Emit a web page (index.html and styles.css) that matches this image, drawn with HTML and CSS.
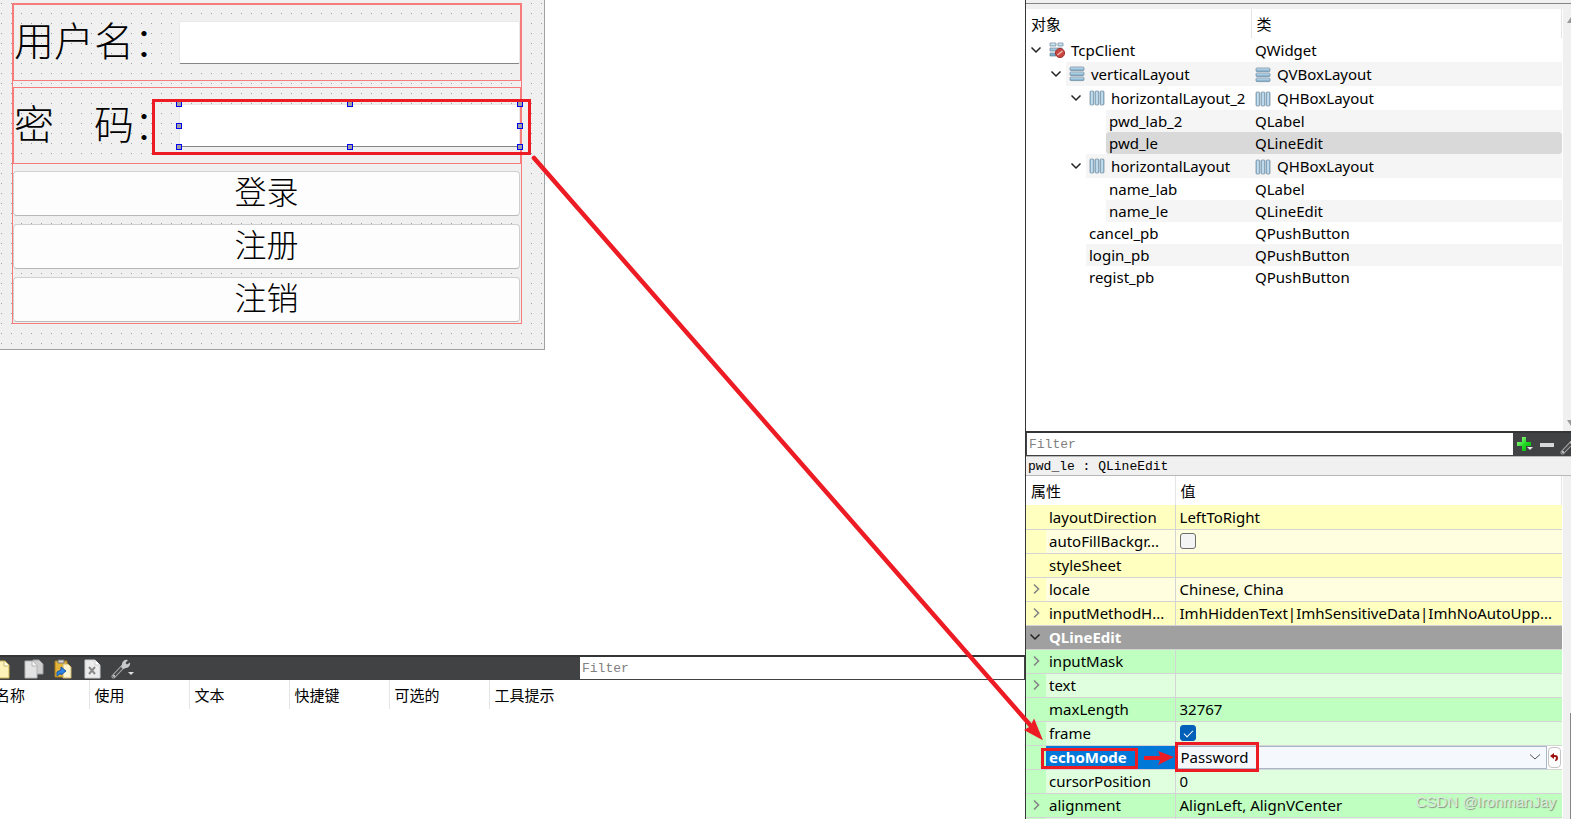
FILE: index.html
```html
<!DOCTYPE html>
<html lang="zh-CN">
<head>
<meta charset="utf-8">
<title>Qt Designer - TcpClient</title>
<link rel="stylesheet" href="styles.css">
</head>
<body>
<svg class="defs" width="0" height="0" aria-hidden="true">
  <defs>
    <linearGradient id="barH" x1="0" y1="0" x2="0" y2="1"><stop offset="0" stop-color="#d3e9f6"/><stop offset="1" stop-color="#6fa3c6"/></linearGradient>
    <linearGradient id="barV" x1="0" y1="0" x2="1" y2="0"><stop offset="0" stop-color="#7fb0d0"/><stop offset=".5" stop-color="#d3e9f6"/><stop offset="1" stop-color="#7fa9c8"/></linearGradient>
    <linearGradient id="plus" x1="0" y1="0" x2="1" y2="1"><stop offset="0" stop-color="#c8ffb0"/><stop offset=".5" stop-color="#25dd25"/><stop offset="1" stop-color="#00a800"/></linearGradient>
    <symbol id="chev" viewBox="0 0 12 12"><path d="M1.500 3.500 6 8l4.500-4.500" fill="none" stroke="#222" stroke-width="1.500"/></symbol>
    <symbol id="chevr" viewBox="0 0 12 12"><path d="M4 1.500 8.500 6 4 10.500" fill="none" stroke="#858585" stroke-width="1.600"/></symbol>
    <symbol id="vbox" viewBox="0 0 16 16"><g fill="url(#barH)" stroke="#6a8599" stroke-width=".7"><rect x="1" y="1" width="14" height="3.600" rx="1"/><rect x="1" y="6" width="14" height="3.600" rx="1"/><rect x="1" y="11" width="14" height="3.600" rx="1"/></g></symbol>
    <symbol id="hbox" viewBox="0 0 16 16"><g fill="url(#barV)" stroke="#70869a" stroke-width=".7"><rect x="1" y="1" width="3.800" height="14" rx="1"/><rect x="6.100" y="1" width="3.800" height="14" rx="1"/><rect x="11.200" y="1" width="3.800" height="14" rx="1"/></g></symbol>
    <symbol id="wrench" viewBox="0 0 20 20"><path d="M2.500 17.500 12 7.500" stroke="#aaa" stroke-width="4" stroke-linecap="round"/><path d="M2.500 17.500 12 7.500" stroke="#4a4a4a" stroke-width="2.200" stroke-linecap="round"/><path d="M17 1a4.500 4.500 0 0 0-6 4.500L10 8l2 2 3-1a4.500 4.500 0 0 0 4-5.500l-3 2-1.500-1.500z" fill="#c9c9c9"/><circle cx="3" cy="17" r="1" fill="#ddd"/></symbol>
  </defs>
</svg>
<div class="app">
  <main class="left">
    <section class="canvas">
      <form class="form">
        <div class="vlayout">
          <div class="hlayout hlayout-first">
            <label for="user">用户名：</label>
            <input id="user" type="text">
          </div>
          <div class="hlayout">
            <label for="pwd">密　码：</label>
            <div class="selected">
              <input id="pwd" type="password">
              <i class="h tl"></i><i class="h tc"></i><i class="h tr"></i>
              <i class="h ml"></i><i class="h mr"></i>
              <i class="h bl"></i><i class="h bc"></i><i class="h br"></i>
              <span class="mark mark-field"></span>
            </div>
          </div>
          <div class="buttons">
            <button type="button">登录</button>
            <button type="button">注册</button>
            <button type="button">注销</button>
          </div>
        </div>
      </form>
    </section>
    <section class="actions">
      <div class="bar">
        <div class="tools">
          <button type="button" class="tool tool-cut" aria-label="New"><svg width="20" height="20"><path d="M5 2h10l4 4v13H5z" fill="#fdf3b8" stroke="#c9b252"/><path d="M14 2v5h5" fill="#fff" stroke="#cdb860"/></svg></button>
          <button type="button" class="tool" aria-label="Copy"><svg width="20" height="20"><path d="M9 1h6l4 4v10H9z" fill="#cfcfcf" stroke="#a0a0a0"/><path d="M1 2h8l4 4v13H1z" fill="#e3e3e3" stroke="#b5b5b5"/><path d="M8 2v5h5" fill="#f5f5f5" stroke="#b5b5b5"/></svg></button>
          <button type="button" class="tool" aria-label="Paste"><svg width="20" height="20"><path d="M2 2h12v16H2z" fill="#e4b33a" stroke="#a57a18"/><path d="M5 1h6v3H5z" fill="#ddd" stroke="#777"/><path d="M10 5h5l3 3v11h-8z" fill="#fdf5cf" stroke="#cdb56a"/><path d="M4 17v-4l4-2V8l5 4-5 4v-2z" fill="#2f83e6" stroke="#1659a8"/></svg></button>
          <button type="button" class="tool" aria-label="Delete"><svg width="20" height="20"><path d="M3 1h10l5 5v13H3z" fill="#ececec" stroke="#d0d0d0"/><path d="M13 1v5h5" fill="#fff" stroke="#ccc"/><path d="m7 8 6 7M13 8l-6 7" stroke="#8a8a8a" stroke-width="2"/></svg></button>
          <button type="button" class="tool" aria-label="Configure"><svg width="24" height="20" viewBox="0 0 24 20"><use href="#wrench" width="20" height="20"/><path d="M17 13h6l-3 3z" fill="#ddd"/></svg></button>
        </div>
        <input class="filter" type="text" placeholder="Filter" aria-label="Filter actions">
      </div>
      <table class="heads">
        <tr><th class="first"><span>名称</span></th><th>使用</th><th>文本</th><th>快捷键</th><th>可选的</th><th class="last">工具提示</th></tr>
      </table>
    </section>
  </main>
  <aside class="right">
    <section class="objects">
      <div class="view">
        <table class="tree">
          <colgroup><col class="c-object"><col></colgroup>
          <tr class="head"><th>对象</th><th>类</th></tr>
          <tr class="node d0"><td><div><svg class="chev"><use href="#chev"/></svg><svg class="ic" viewBox="0 0 16 16"><g fill="url(#barH)" stroke="#6a8599" stroke-width=".7"><path d="M1 1h6v3H1zM9 1h5v3H9zM1 6h12v3H1zM1 11h6v3H1z"/></g><circle cx="11" cy="11" r="4.600" fill="#c9453f" stroke="#9c3531"/><path d="m8.500 13 5-4" stroke="#f0b9b5" stroke-width="1.600"/></svg><span>TcpClient</span></div></td><td>QWidget</td></tr>
          <tr class="node d1 alt"><td><div><svg class="chev"><use href="#chev"/></svg><svg class="ic"><use href="#vbox"/></svg><span>verticalLayout</span></div></td><td><svg class="ic"><use href="#vbox"/></svg>QVBoxLayout</td></tr>
          <tr class="node d2"><td><div><svg class="chev"><use href="#chev"/></svg><svg class="ic"><use href="#hbox"/></svg><span>horizontalLayout_2</span></div></td><td><svg class="ic"><use href="#hbox"/></svg>QHBoxLayout</td></tr>
          <tr class="d3 alt"><td><div>pwd_lab_2</div></td><td>QLabel</td></tr>
          <tr class="d3 sel"><td><div>pwd_le</div></td><td>QLineEdit</td></tr>
          <tr class="node d2 alt"><td><div><svg class="chev"><use href="#chev"/></svg><svg class="ic"><use href="#hbox"/></svg><span>horizontalLayout</span></div></td><td><svg class="ic"><use href="#hbox"/></svg>QHBoxLayout</td></tr>
          <tr class="d3"><td><div>name_lab</div></td><td>QLabel</td></tr>
          <tr class="d3 alt"><td><div>name_le</div></td><td>QLineEdit</td></tr>
          <tr class="d2"><td><div>cancel_pb</div></td><td>QPushButton</td></tr>
          <tr class="d2 alt"><td><div>login_pb</div></td><td>QPushButton</td></tr>
          <tr class="d2"><td><div>regist_pb</div></td><td>QPushButton</td></tr>
        </table>
      </div>
      <div class="scroll"><svg width="4" height="6"><path d="M4 0v6H0z" fill="#9a9a9a"/></svg><svg width="4" height="6"><path d="M0 0h4v6z" fill="#9a9a9a"/></svg></div>
    </section>
    <section class="props">
      <div class="bar">
        <input class="filter" type="text" placeholder="Filter" aria-label="Filter properties">
        <div class="tools">
          <button type="button" aria-label="Add"><svg width="18" height="18"><path d="M6 1h4v5h5v4h-5v5H6v-5H1V6h5z" fill="url(#plus)"/><path d="M11 11h6l-3 3z" fill="#e8e8e8"/></svg></button>
          <button type="button" aria-label="Remove"><svg width="16" height="16"><path d="M1 6h14v4H1z" fill="#d8d8d8"/></svg></button>
          <button type="button" aria-label="Configure"><svg width="20" height="20"><use href="#wrench"/></svg></button>
        </div>
      </div>
      <div class="status">pwd_le : QLineEdit</div>
      <div class="body">
        <table class="sheet">
          <colgroup><col class="c-gut"><col class="c-name"><col></colgroup>
          <tr class="head"><th colspan="2">属性</th><th>值</th></tr>
          <tr class="y"><td></td><td>layoutDirection</td><td>LeftToRight</td></tr>
          <tr class="y lite"><td></td><td><label for="afb">autoFillBackgr...</label></td><td><input type="checkbox" id="afb"></td></tr>
          <tr class="y"><td></td><td>styleSheet</td><td></td></tr>
          <tr class="y lite"><td><svg class="chev"><use href="#chevr"/></svg></td><td>locale</td><td>Chinese, China</td></tr>
          <tr class="y"><td><svg class="chev"><use href="#chevr"/></svg></td><td>inputMethodH...</td><td>ImhHiddenText|ImhSensitiveData|ImhNoAutoUpp...</td></tr>
          <tr class="group"><td><svg class="chev"><use href="#chev"/></svg></td><td colspan="2">QLineEdit</td></tr>
          <tr class="g"><td><svg class="chev"><use href="#chevr"/></svg></td><td>inputMask</td><td></td></tr>
          <tr class="g lite"><td><svg class="chev"><use href="#chevr"/></svg></td><td>text</td><td></td></tr>
          <tr class="g"><td></td><td>maxLength</td><td>32767</td></tr>
          <tr class="g lite"><td></td><td><label for="frm">frame</label></td><td><input type="checkbox" id="frm" checked></td></tr>
          <tr class="g current"><td></td><td><label for="echo">echoMode</label><span class="mark mark-name"></span></td><td>
            <div class="edit"><select id="echo"><option>Password</option></select><svg class="drop" width="12" height="12" viewBox="0 0 12 12"><path d="M1 3.500 6 8l5-4.500" fill="none" stroke="#555"/></svg><button type="button" class="reset" aria-label="Reset"><svg width="8" height="8"><path d="M0 3 4 0v2h1q3 0 3 3T5 8V7q1-1 1-2T5 4H4v2z" fill="#9c1010"/></svg></button></div>
            <span class="mark mark-value"></span></td></tr>
          <tr class="g lite"><td></td><td>cursorPosition</td><td>0</td></tr>
          <tr class="g"><td><svg class="chev"><use href="#chevr"/></svg></td><td>alignment</td><td>AlignLeft, AlignVCenter</td></tr>
          <tr class="g lite"><td></td><td></td><td></td></tr>
        </table>
        <div class="scroll"><i class="thumb"></i></div>
      </div>
    </section>
  </aside>
  <svg class="arrows" viewBox="0 0 1571 819" aria-hidden="true">
    <path d="M534 158 1031 726" stroke="#ed1c24" stroke-width="4.500" stroke-linecap="round"/>
    <path d="M1041 738 1026 730 1031 727 1034 721z" fill="#ed1c24" stroke="#ed1c24" stroke-width="2"/>
    <path d="M1144 758h20" stroke="#ed1c24" stroke-width="4"/>
    <path d="M1174 757 1158 751 1161 758 1158 765z" fill="#ed1c24"/>
  </svg>
  <div class="watermark">CSDN @IronmanJay</div>
</div>
</body>
</html>
```
FILE: styles.css
```css
* { box-sizing: border-box; }
body {
  margin: 0;
  background: #fff;
  color: #000;
  font: 15px/22px "Noto Sans", "Noto Sans CJK SC", sans-serif;
}
.defs { position: absolute; }
.app {
  position: relative;
  display: grid;
  grid-template-columns: minmax(0, 1fr) 546px;
  grid-template-rows: minmax(0, 1fr);
  height: 100vh;
  overflow: hidden;
}
button, input, select { font: inherit; color: inherit; margin: 0; }
svg { display: block; flex: none; }

/* form canvas */
.left { display: flex; flex-direction: column; min-width: 0; }
.canvas { flex: 1; min-height: 0; }
.form {
  width: 545px;
  padding: 3px 22px 25px 12px;
  border: solid #a0a0a0;
  border-width: 0 1px 1px 0;
  background: conic-gradient(at 1px 1px, transparent 75%, #a0a0a0 0) 1px 3px / 10px 10px #f0f0f0;
}
.vlayout { border: 1px solid #f77b7b; border-top: 0; }
.hlayout {
  display: flex;
  align-items: center;
  height: 77px;
  margin: 0 0 7px;
  border: 1px solid #f77b7b;
}
.hlayout-first { height: 78px; margin-bottom: 6px; border-top-width: 2px; }
.hlayout label {
  width: 165px;
  padding-bottom: 8px;
  font: 300 40px/58px "Noto Sans CJK SC", sans-serif;
  white-space: nowrap;
}
.hlayout input {
  display: block;
  width: 100%;
  height: 43px;
  padding: 0 8px;
  background: #fff;
  border: 1px solid #e8e8e8;
  border-bottom-color: #868686;
  border-radius: 2px;
}
.selected { position: relative; flex: 1; }
.hlayout-first input { flex: 1; }
.h {
  position: absolute;
  width: 6px;
  height: 6px;
  background: #a0a0a0;
  border: 1px solid #0000f0;
}
.tl, .tc, .tr { top: -3px; }
.ml, .mr { top: 19px; }
.bl, .bc, .br { bottom: -3px; }
.tl, .ml, .bl { left: -3px; }
.tc, .bc { left: calc(50% - 3px); }
.tr, .mr, .br { right: -3px; }
.mark { position: absolute; border: 3px solid #ed1c24; }
.mark-field { inset: -5px -11px -8px -27px; }
.buttons { display: grid; gap: 8px; padding: 0 1px 1px 0; }
.buttons button {
  height: 45px;
  padding: 0 0 6px;
  background: #fdfdfd;
  border: 1px solid #d0d0d0;
  border-bottom-color: #b8b8b8;
  border-radius: 4px;
  font: 300 32px/37px "Noto Sans CJK SC", sans-serif;
}

/* toolbars */
.bar {
  display: flex;
  height: 25px;
  background: #404244;
  border-top: 2px solid #333537;
}
.tools { display: flex; align-items: center; }
.tools button { padding: 0; border: 0; background: none; }
.filter {
  min-width: 0;
  padding: 2px 2px 0;
  background: #fff;
  border: 0;
  border-radius: 0;
  border-bottom: 1px solid #404244;
  font: 13px/20px "Liberation Mono", monospace;
}
.filter::placeholder { color: #808080; opacity: 1; }

/* action editor */
.actions { flex: none; height: 164px; }
.actions .tools { width: 580px; gap: 9px; overflow: hidden; }
.actions .filter { flex: 1; margin-right: 1px; }
.tool-cut { margin: 0 5px 0 -10px; }
.heads { width: 100%; table-layout: fixed; border-collapse: collapse; }
.heads th {
  width: 100px;
  height: 29px;
  padding: 0 5px;
  border-right: 1px solid #e5e5e5;
  text-align: left;
  font-weight: 400;
}
.heads .first { width: 89px; padding: 0; }
.heads .first span { margin-left: -5px; }
.heads .last { width: auto; border: 0; }

/* object inspector */
.right {
  display: flex;
  flex-direction: column;
  min-width: 0;
  border-left: 1px solid #333537;
}
.objects {
  display: flex;
  flex: none;
  height: 431px;
  padding-top: 6px;
  border-top: 3px solid #f0f0f0;
  background: linear-gradient(#868686, #868686) 0 0 / 100% 1px no-repeat #f0f0f0;
}
.view { flex: 1; min-width: 0; background: #fff; border-right: 1px solid #fff; }
.scroll {
  display: flex;
  flex-direction: column;
  justify-content: space-between;
  align-items: flex-end;
  width: 8px;
  padding: 8px 0 5px;
  background: #f0f0f0;
}
table { border-spacing: 0; }
.tree, .sheet { width: 100%; table-layout: fixed; border-collapse: collapse; }
.c-object { width: 225px; }
.tree td, .sheet td { padding: 0; height: 22px; white-space: nowrap; }
.tree th, .sheet th {
  height: 29px;
  padding: 0 5px;
  border-right: 1px solid #e5e5e5;
  text-align: left;
  font-weight: 400;
}
.tree td div { display: flex; align-items: center; height: 22px; padding-left: 3px; }
.tree .node td, .tree .node td div { height: 24px; }
.tree td:last-child { padding-left: 4px; }
.tree td:last-child .ic { display: inline-block; vertical-align: -3px; margin: 0 6px 0 0; }
.ic { width: 16px; height: 16px; margin-right: 6px; }
.chev { width: 12px; height: 12px; }
.node .chev { margin: 0 7px 0 -19px; }
.d0 td:first-child { padding-left: 20px; }
.d1 td:first-child { padding-left: 40px; }
.d2 td:first-child { padding-left: 60px; }
.d3 td:first-child { padding-left: 80px; }
.alt td div, .alt td:last-child { background: #f5f5f5; }
.sel td div, .sel td:last-child { background: #d9d9d9; }
.sel td div { border-radius: 3px 0 0 3px; }
.sel td:last-child { border-radius: 0 3px 3px 0; }

/* property editor */
.props { flex: 1; min-height: 0; display: flex; flex-direction: column; }
.bar, .status { flex: none; }
.props .filter { flex: 1; margin-left: 1px; }
.props .tools { width: 58px; gap: 5px; padding-left: 3px; overflow: hidden; }
.status {
  height: 20px;
  padding: 0 2px;
  background: #f0f0f0;
  border: solid #b8b8b8;
  border-width: 1px 0;
  font: 13px/20px "Liberation Mono", monospace;
}
.body { flex: 1; min-height: 0; display: flex; }
.sheet { flex: 1; min-width: 0; align-self: flex-start; margin-right: 1px; }
.c-gut { width: 20px; }
.c-name { width: 129px; }
.sheet td { height: 24px; padding-left: 3px; border-bottom: 1px solid #d4d4d4; line-height: 20px; }
.sheet td:nth-child(2) { border-right: 1px solid #d4d4d4; }
.sheet td:nth-child(3) { padding-left: 4px; }
.sheet td:first-child { padding-left: 4px; }
.y td, .y.lite td:first-child { background: #ffffbf; }
.y.lite td { background: #ffffdf; }
.g td, .g.lite td:first-child { background: #bfffbf; }
.g.lite td { background: #dfffdf; }
.sheet .group td { background: #a0a0a0; color: #fff; font-weight: 700; border-right: 0; }
.sheet .group td:first-child { padding-left: 3px; }
.sheet input {
  appearance: none;
  display: block;
  width: 16px;
  height: 16px;
  border: 1px solid #6d6d6d;
  border-radius: 3px;
  background: #f4f4f4;
}
.sheet input:checked { border-color: #005fb8; background: #005fb8; }
.sheet input:checked::after {
  content: "";
  display: block;
  width: 8px;
  height: 4px;
  margin: 4px 0 0 3px;
  border: solid #fff;
  border-width: 0 0 1px 1px;
  transform: rotate(-45deg);
}
.current td { position: relative; }
.sheet .current td:nth-child(2) { background: #0078d7; color: #fff; font-weight: 700; }
.sheet .current td:last-child { padding: 0; background: #fff; }
.edit { display: flex; align-items: center; gap: 1px; height: 23px; padding-right: 1px; }
.edit select {
  appearance: none;
  flex: 1;
  height: 23px;
  padding: 0 5px;
  border: 1px solid #a9b8c8;
  border-left: 0;
  border-radius: 1px;
  background: #f5f9fd;
}
.drop { margin: 0 6px 0 -19px; }
.reset {
  display: grid;
  place-items: center;
  width: 13px;
  height: 21px;
  padding: 0;
  border: 1px solid #c4c4c4;
  border-radius: 4px;
  background: #fdfdfd;
}
.mark-name { inset: 2px 37px 0 -5px; }
.mark-value { top: -4px; left: -1px; width: 84px; height: 30px; }
.body .scroll { padding: 237px 0 0; }
.thumb { flex: 1; width: 1px; background: #868686; }

/* overlays */
.arrows { position: absolute; left: 0; top: 0; width: 1571px; height: 819px; pointer-events: none; }
.watermark {
  position: absolute;
  right: 15px;
  bottom: 6px;
  color: #dfeadf;
  font: 15px/22px "Liberation Sans", sans-serif;
  text-shadow: 1px 1px 1px #7d8f7d;
}
```
